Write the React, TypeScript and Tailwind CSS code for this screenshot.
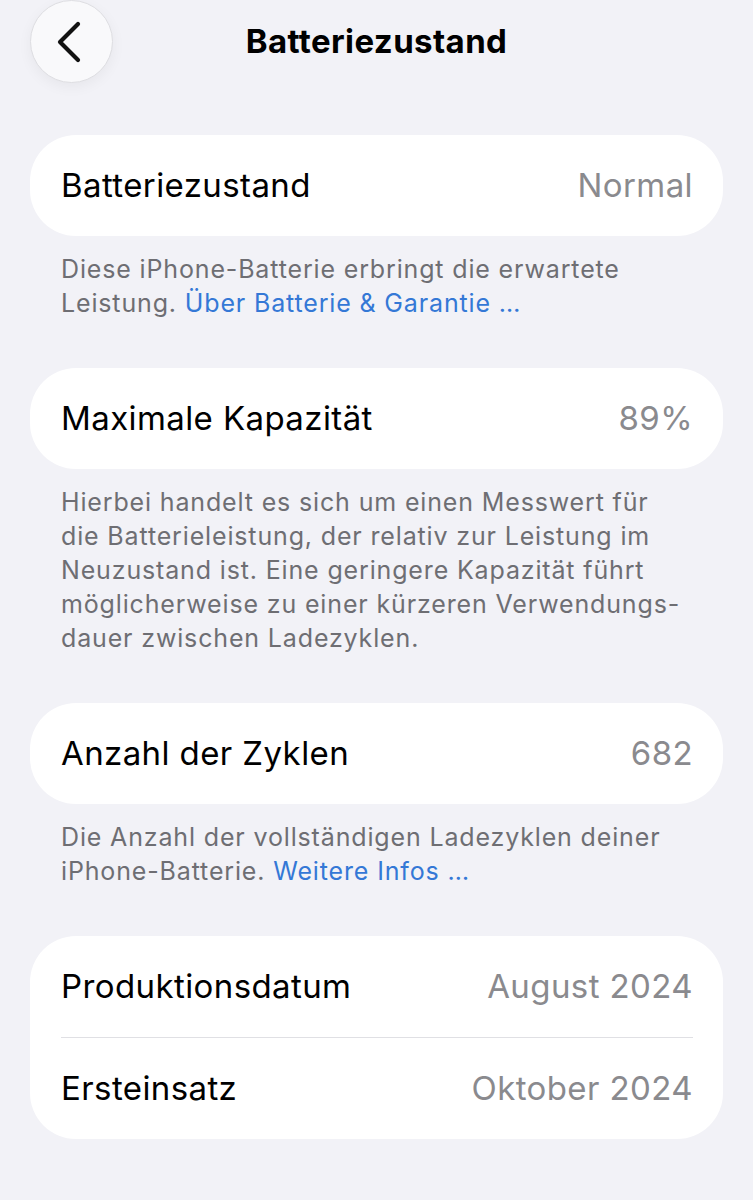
import React from 'react';

const font = { fontFamily: 'Inter, "Noto Sans", sans-serif' };

const Row: React.FC<{ label: string; value: string }> = ({ label, value }) => (
  <div className="h-[101px] flex items-center justify-between">
    <span className="text-[33px] text-black tracking-[0.4px]">{label}</span>
    <span className="text-[33px] text-[#8a8a8e] tracking-[0.4px]">{value}</span>
  </div>
);

const Card: React.FC<{ children: React.ReactNode }> = ({ children }) => (
  <div className="bg-white rounded-[46px] pl-[31px] pr-[30px]">{children}</div>
);

const Footer: React.FC<{ children: React.ReactNode }> = ({ children }) => (
  <p className="mt-4 mb-12 pl-[31px] pr-[36px] text-[25px] leading-[34px] text-[#6e6e73] tracking-[0.85px]">{children}</p>
);

const Link: React.FC<{ children: React.ReactNode }> = ({ children }) => (
  <span className="text-[#3478d6]">{children}</span>
);

export default function App() {
  return (
    <div className="w-[753px] h-[1200px] bg-[#f2f2f7] overflow-hidden" style={font}>
      <div className="relative h-[83px] flex items-center justify-center">
        <button className="absolute left-[30px] top-0 w-[83px] h-[83px] rounded-full bg-[#f9f9fb] border border-[#dedee2] shadow-[0_4px_14px_rgba(0,0,0,0.05)] flex items-center justify-center">
          <svg width="26" height="42" viewBox="0 0 26 42" fill="none" className="-ml-[6px]">
            <path d="M22 3 L4 21 L22 39" stroke="#111" strokeWidth="4.2" strokeLinecap="round" strokeLinejoin="round" />
          </svg>
        </button>
        <h1 className="text-[33px] font-bold text-black tracking-[0.4px]">Batteriezustand</h1>
      </div>

      <div className="px-[30px] pt-[52px]">
        <Card>
          <Row label="Batteriezustand" value="Normal" />
        </Card>
        <Footer>
          Diese iPhone-Batterie erbringt die erwartete Leistung. <Link>Über Batterie &amp; Garantie …</Link>
        </Footer>

        <Card>
          <Row label="Maximale Kapazität" value="89%" />
        </Card>
        <Footer>
          Hierbei handelt es sich um einen Messwert für die Batterieleistung, der relativ zur Leistung im Neuzustand ist. Eine geringere Kapazität führt möglicherweise zu einer kürzeren Verwendungs-dauer zwischen Ladezyklen.
        </Footer>

        <Card>
          <Row label="Anzahl der Zyklen" value="682" />
        </Card>
        <Footer>
          Die Anzahl der vollständigen Ladezyklen deiner iPhone-Batterie. <Link>Weitere Infos …</Link>
        </Footer>

        <Card>
          <Row label="Produktionsdatum" value="August 2024" />
          <div className="h-px bg-[#e0e0e4]" />
          <Row label="Ersteinsatz" value="Oktober 2024" />
        </Card>
      </div>
    </div>
  );
}
